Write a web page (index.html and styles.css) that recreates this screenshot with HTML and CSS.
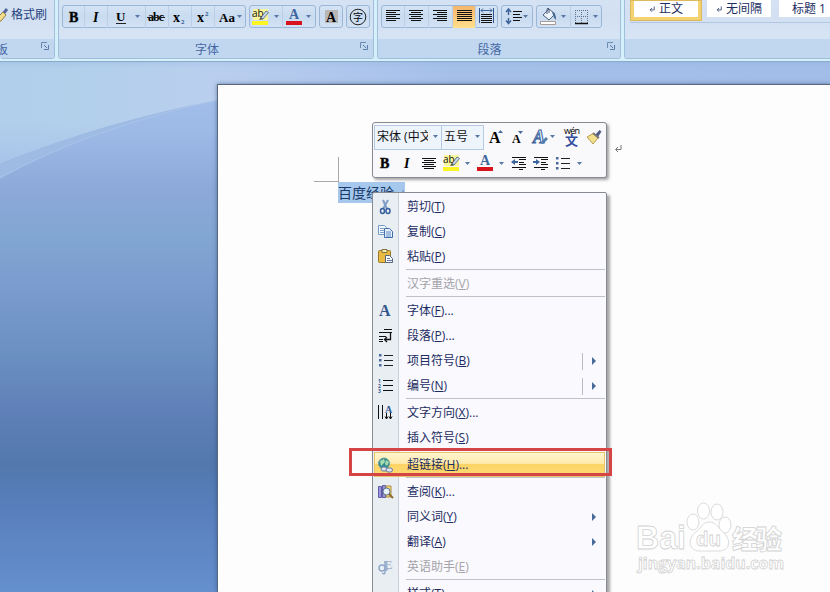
FILE: index.html
```html
<!DOCTYPE html>
<html lang="zh-CN">
<head>
    <meta charset="UTF-8">
    <meta name="viewport" content="width=device-width, initial-scale=1.0">
    <title>Word</title>
    <link rel="stylesheet" href="styles.css">
</head>
<body>
    <!-- shared icons -->
    <svg class="defs" width="0" height="0">
        <symbol id="drop" viewBox="0 0 5 3"><path d="M0 0h5L2.500 3z" fill="#5878a8"/></symbol>
        <symbol id="launcher" viewBox="0 0 8 8">
            <path d="M.5 6V.5H6" fill="none" stroke="#6b8bb3"/>
            <path d="M3 3l3 3M7.500 3v4.500H3" fill="none" stroke="#5d7ea8"/>
        </symbol>
        <symbol id="marker" viewBox="0 0 18 18">
            <path d="M1 1h15v11H1z" fill="#f8f59a"/>
            <text x="0" y="9" class="ui" font-size="10" fill="#111">ab</text>
            <path d="M8 11l6-8 2.500 1.500L11 11z" fill="#c9d8ea" stroke="#46617f" stroke-width=".8"/>
            <path d="M7 12l2-3 2 2z" fill="#555"/>
            <path d="M0 13h16v4H0z" fill="#fdf423"/>
        </symbol>
        <symbol id="fontcolor" viewBox="0 0 18 18">
            <text x="3" y="11" class="serif" font-size="14" fill="#3e659c">A</text>
            <path d="M0 13h16v4H0z" fill="#d9131d"/>
        </symbol>
        <symbol id="brush" viewBox="0 0 16 16">
            <path d="M9 6l4.500-5 2 1.500L12 8z" fill="#4f5d86"/>
            <path d="M1 8l6-3.500 5 4.500-5 6z" fill="#f3e08c" stroke="#a58a3a" stroke-width=".8"/>
            <path d="M7 4l6 5" stroke="#777" stroke-width="2"/>
        </symbol>
        <symbol id="bullets" viewBox="0 0 14 14">
            <path d="M0 1h2.500v2.500H0zM0 6h2.500v2.500H0zM0 11h2.500v2.500H0z" fill="#47699d"/>
            <path d="M5 2.500h9M5 7.500h9M5 12.500h9" stroke="#222"/>
        </symbol>
        <symbol id="return" viewBox="0 0 8 8">
            <path d="M7 0v4.500H2M4 2L1.500 4.500 4 7" fill="none" stroke="currentColor"/>
        </symbol>
    </svg>

    <div class="ribbon">
        <div class="group clipboard">
            <div class="tools">
                <svg width="9" height="18"><path d="M3 8l4-5" stroke="#5568a0" stroke-width="3"/><path d="M-3 12l6-6 3 3-5 6-4 1z" fill="#f2dc8a" stroke="#94803e"/></svg>
                <span>格式刷</span>
            </div>
            <div class="caption"><span class="cut">剪贴板</span><svg class="launcher"><use href="#launcher"/></svg></div>
        </div>

        <div class="group font">
            <div class="tools">
                <div class="buttons">
                    <svg width="22" height="22"><text x="6" y="16" class="serif bold" font-size="14" stroke="#111" stroke-width=".5">B</text></svg>
                    <svg width="23" height="22"><text x="8" y="16" class="serif italic" font-size="14">I</text></svg>
                    <svg width="38" height="22"><text x="8" y="15" class="serif" font-size="13">U</text><path d="M8 17.500h10" stroke="#222"/><use href="#drop" x="27" y="9" width="5" height="3"/></svg>
                    <svg width="23" height="22"><text x="2" y="15" class="serif" font-size="12" textLength="16">abc</text><path d="M1 11.500h18" stroke="#222"/></svg>
                    <svg width="23" height="22"><text x="4" y="16" class="serif" font-size="14">x</text><text x="12" y="18" class="ui bold" font-size="6" fill="#47699d">2</text></svg>
                    <svg width="23" height="22"><text x="5" y="16" class="serif" font-size="14">x</text><text x="13" y="10" class="ui bold" font-size="6" fill="#47699d">2</text></svg>
                    <svg width="30" height="22"><text x="4" y="16" class="serif" font-size="13" textLength="16">Aa</text><use href="#drop" x="22" y="9" width="5" height="3"/></svg>
                </div>
                <div class="buttons">
                    <svg width="33" height="22"><use href="#marker" x="2" y="2" width="18" height="18"/><use href="#drop" x="24" y="9" width="5" height="3"/></svg>
                    <svg width="32" height="22"><use href="#fontcolor" x="3" y="2" width="18" height="18"/><use href="#drop" x="23" y="9" width="5" height="3"/></svg>
                </div>
                <div class="buttons">
                    <svg width="22" height="22"><path d="M5 4h13v13H5z" fill="#b9b7b5"/><text x="6" y="16" class="serif" font-size="14">A</text></svg>
                </div>
                <div class="buttons">
                    <svg width="22" height="22"><circle cx="11" cy="11" r="7.800" fill="none" stroke="#222"/><text x="6" y="15" class="ui" font-size="10">字</text></svg>
                </div>
            </div>
            <div class="caption"><span>字体</span><svg class="launcher"><use href="#launcher"/></svg></div>
        </div>

        <div class="group paragraph">
            <div class="tools">
                <div class="buttons">
                    <svg width="23" height="22"><path d="M4 4.500h14M4 6.500h10M4 8.500h14M4 10.500h10M4 12.500h14M4 14.500h10" stroke="#111"/></svg>
                    <svg width="24" height="22"><path d="M4 4.500h14M6 6.500h10M4 8.500h14M6 10.500h10M4 12.500h14M6 14.500h10" stroke="#111"/></svg>
                    <svg width="24" height="22"><path d="M4 4.500h14M8 6.500h10M4 8.500h14M8 10.500h10M4 12.500h14M8 14.500h10" stroke="#111"/></svg>
                    <svg class="active" width="23" height="22"><path d="M4 4.500h15M4 6.500h15M4 8.500h15M4 10.500h15M4 12.500h15M4 14.500h15" stroke="#111"/></svg>
                    <svg width="21" height="22"><path d="M3.500 2v15M17.500 2v15" stroke="#31548c"/><path d="M5 4.500h11M7 2.500l-2 2 2 2M14 2.500l2 2-2 2" fill="none" stroke="#3e659c"/><path d="M5 8.500h11M5 10.500h11M5 12.500h11M5 14.500h11M5 16.500h11" stroke="#111"/></svg>
                </div>
                <div class="buttons">
                    <svg width="30" height="22"><path d="M6.500 4v5M4 6l2.500-3L9 6M6.500 12v5M4 14.500l2.500 3 2.500-3" fill="none" stroke="#3e659c" stroke-width="1.500"/><path d="M11 5.500h9M11 8.500h7M11 11.500h9M11 14.500h7" stroke="#111"/><use href="#drop" x="21" y="9" width="5" height="3"/></svg>
                </div>
                <div class="buttons">
                    <svg width="34" height="22"><path d="M6 9l6-6 6 5-6 6z" fill="#edf3fa" stroke="#4c5f7d"/><path d="M10 8V3q1-2 2 0v4" fill="none" stroke="#4c5f7d"/><path d="M15 6q4 0 4 8-2-1-3-5z" fill="#46699a"/><path d="M3.500 15.500h15v3h-15z" fill="#fff" stroke="#a89c94"/><use href="#drop" x="24" y="9" width="5" height="3"/></svg>
                    <svg width="30" height="22"><path d="M4.500 4v13M10.500 4v13M16.500 4v13M4 4.500h13M4 10.500h13" stroke="#60718f" stroke-dasharray="1 1"/><path d="M4 17.500h13" stroke="#111" stroke-width="1.500"/><use href="#drop" x="22" y="9" width="5" height="3"/></svg>
                </div>
            </div>
            <div class="caption"><span>段落</span><svg class="launcher"><use href="#launcher"/></svg></div>
        </div>

        <div class="group styles">
            <div class="gallery">
                <div class="style selected"><svg class="return"><use href="#return"/></svg>正文</div>
                <div class="style"><svg class="return"><use href="#return"/></svg>无间隔</div>
                <div class="style heading">标题 1</div>
            </div>
            <div class="caption"></div>
        </div>
    </div>

    <div class="workspace">
        <svg class="swoosh" width="830" height="130">
            <defs>
                <linearGradient id="sky" x1="0" y1="0" x2="1" y2="0">
                    <stop offset="0" stop-color="#b0cfea"/>
                    <stop offset=".12" stop-color="#b3cfeb"/>
                    <stop offset=".26" stop-color="#bacfef"/>
                    <stop offset=".55" stop-color="#a5bfe9"/>
                    <stop offset="1" stop-color="#a2bde8"/>
                </linearGradient>
                <linearGradient id="fade" x1="0" y1="0" x2="0" y2="1">
                    <stop offset="0" stop-color="#7ea4d6" stop-opacity=".2"/>
                    <stop offset=".08" stop-color="#a9c7ec" stop-opacity="0"/>
                    <stop offset=".6" stop-color="#a8c4ea" stop-opacity="0"/>
                    <stop offset="1" stop-color="#a8c4ea" stop-opacity=".9"/>
                </linearGradient>
            </defs>
            <path d="M0 116Q90 66 218 38L830 0H0z" fill="#9dbbe3"/>
            <path d="M0 116Q90 66 218 38" fill="none" stroke="#a9c5eb"/>
            <path d="M0 101Q110 58 218 38L300 24H830V0H0z" fill="url(#sky)"/>
            <path d="M0 101Q110 58 218 38L300 24H830V0H0z" fill="url(#fade)"/>
        </svg>
        <div class="page">
            <svg class="corner" width="25" height="25"><path d="M24.500 0v24.500M0 24.500h25" stroke="#a9a9a9" fill="none"/></svg>
            <span class="selection">百度经验<svg class="return"><use href="#return"/></svg></span>
            <svg class="return line-end"><use href="#return"/></svg>
            <svg class="watermark" width="160" height="80">
                <text x="1" y="49" class="logo" font-size="34" textLength="50" lengthAdjust="spacingAndGlyphs">Bai</text>
                <ellipse cx="58" cy="22" rx="6" ry="8"/>
                <ellipse cx="68.500" cy="11" rx="6" ry="8"/>
                <ellipse cx="82" cy="12" rx="6" ry="8"/>
                <ellipse cx="90" cy="25" rx="6" ry="8"/>
                <path d="M74 22c-6 0-8 6-13 10-10 8-6 19 3 19 5 0 16 0 20 0 10 0 13-10 5-18-5-4-8-11-15-11z"/>
                <text x="61" y="46" class="logo" font-size="21" textLength="25" lengthAdjust="spacingAndGlyphs">du</text>
                <text x="97" y="49" class="ui heavy" font-size="26" textLength="50">经验</text>
                <text x="3" y="69" class="ui bold" font-size="16" textLength="146" lengthAdjust="spacingAndGlyphs">jingyan.baidu.com</text>
            </svg>
        </div>
    </div>

    <div class="mini-toolbar">
        <div class="row">
            <div class="combo family"><span>宋体 (中文)</span><svg><use href="#drop"/></svg></div>
            <div class="combo size"><span>五号</span><svg><use href="#drop"/></svg></div>
            <svg width="24" height="24"><text x="5" y="18" class="serif" font-size="16">A</text><path d="M14 8l2.500-3L19 8z" fill="#47699d"/></svg>
            <svg width="22" height="24"><text x="4" y="18" class="serif" font-size="12">A</text><path d="M10 6h5l-2.500 3z" fill="#47699d"/></svg>
            <svg width="32" height="24"><text x="3" y="18" class="serif italic" font-size="18" fill="#dcebf8" stroke="#3e659c">A</text><path d="M10 18l6-6 2 2-5 5z" fill="#527eac"/><use href="#drop" x="20" y="10" width="5" height="3"/></svg>
            <svg width="24" height="24"><text x="2" y="9" class="ui" font-size="9" textLength="16">wén</text><text x="3" y="20" class="ui bold" font-size="13" fill="#334f9f">文</text></svg>
            <svg width="19" height="24"><use href="#brush" x="0" y="4" width="16" height="16"/></svg>
        </div>
        <div class="row">
            <svg width="23" height="26"><text x="6" y="18" class="serif bold" font-size="14" stroke="#111" stroke-width=".5">B</text></svg>
            <svg width="24" height="26"><text x="7" y="18" class="serif italic" font-size="14">I</text></svg>
            <svg width="21" height="26"><path d="M1 8.500h14M3 10.500h10M1 12.500h14M3 14.500h10M1 16.500h14M3 18.500h10" stroke="#111"/></svg>
            <svg width="34" height="26"><use href="#marker" x="1" y="4" width="18" height="18"/><use href="#drop" x="23" y="12" width="5" height="3"/></svg>
            <svg width="34" height="26"><use href="#fontcolor" x="1" y="4" width="18" height="18"/><use href="#drop" x="23" y="12" width="5" height="3"/></svg>
            <svg width="22" height="26"><path d="M2 7.500h14M9 9.500h7M9 12.500h5M9 14.500h7M2 17.500h14M9 19.500h4" stroke="#111"/><path d="M1 12l4-3v2h3v2H5v2z" fill="#3e659c"/></svg>
            <svg width="22" height="26"><path d="M2 7.500h14M9 9.500h7M9 12.500h5M9 14.500h7M2 17.500h14M9 19.500h4" stroke="#111"/><path d="M8 12L4 9v2H1v2h3v2z" fill="#3e659c"/></svg>
            <svg width="30" height="26"><use href="#bullets" x="2" y="6" width="14" height="14"/><use href="#drop" x="23" y="12" width="5" height="3"/></svg>
        </div>
    </div>

    <ul class="menu">
        <li><svg><path d="M6 1l4 9M11 1L6 10" stroke="#7f9cc4" stroke-width="2"/><ellipse cx="5.500" cy="12" rx="2" ry="2.500" fill="none" stroke="#365f9e" stroke-width="1.500"/><ellipse cx="11" cy="12" rx="2" ry="2.500" fill="none" stroke="#365f9e" stroke-width="1.500"/></svg><span>剪切(<u>T</u>)</span></li>
        <li><svg><path d="M1.500 1.500h6l2 2v7h-8z" fill="#f3f8fe" stroke="#7399c8"/><path d="M3 4.500h4M3 6.500h4M3 8.500h4" stroke="#7ba2d0"/><path d="M7.500 4.500h5l3 3v6h-8z" fill="#e4f0fd" stroke="#426da9"/><path d="M9 8h5M9 10h5M9 12h5" stroke="#5f8bc4"/></svg><span>复制(<u>C</u>)</span></li>
        <li><svg><rect x="1.500" y="1.500" width="12" height="12" rx="1" fill="#e9bb45" stroke="#9b762a"/><path d="M5 .5h5v3H5z" fill="#f7efb2" stroke="#85733f"/><path d="M8.500 6.500h4l3 3v4h-7z" fill="#f6f9fd" stroke="#59657a"/><path d="M10 9.500h3M10 11.500h5" stroke="#697b98"/></svg><span>粘贴(<u>P</u>)</span></li>
        <li class="sep"></li>
        <li class="disabled"><svg></svg><span>汉字重选(<u>V</u>)</span></li>
        <li class="sep"></li>
        <li><svg><text x="2" y="13" class="serif" font-size="16" fill="#31558c">A</text></svg><span>字体(<u>F</u>)...</span></li>
        <li><svg><path d="M7 1.500h8M2 4.500h13M2 8.500h7M2 11.500h4M2 13.500h4" stroke="#111"/><path d="M13.500 5v6.500H8M10 9l-2.500 2.500L10 14" fill="none" stroke="#111" stroke-width="1.300"/></svg><span>段落(<u>P</u>)...</span></li>
        <li class="split"><svg><use href="#bullets" x="2" y="0" width="14" height="14"/></svg><span>项目符号(<u>B</u>)</span><b class="arrow"></b></li>
        <li class="split"><svg><text x="1" y="5" class="ui bold" font-size="5" fill="#31558c">1</text><text x="1" y="10" class="ui bold" font-size="5" fill="#31558c">2</text><text x="1" y="15" class="ui bold" font-size="5" fill="#31558c">3</text><path d="M6 2.500h10M6 7.500h10M6 12.500h10" stroke="#111"/></svg><span>编号(<u>N</u>)</span><b class="arrow"></b></li>
        <li class="sep"></li>
        <li><svg><path d="M1.500 0v14M5.500 0v14M9.500 8v6M13.500 8v6M8 11.500l1.500 2.500 1.500-2.500M12 11.500l1.500 2.500 1.500-2.500" fill="none" stroke="#111"/><text x="8" y="8" class="serif" font-size="10" fill="#31558c">A</text></svg><span>文字方向(<u>X</u>)...</span></li>
        <li><svg></svg><span>插入符号(<u>S</u>)</span></li>
        <li class="sep"></li>
        <li class="hover"><svg><circle cx="7" cy="6.500" r="5.500" fill="#348c91" stroke="#6d9c9a"/><path d="M3 4l4-2 1 3-4 4zM9 3l3 2-2 4-2-2z" fill="#a6dcae"/><rect x="4" y="10" width="6" height="4" rx="2" fill="#dbe3ee" stroke="#647a9b"/><rect x="9" y="11" width="6.500" height="4" rx="2" fill="#dbe3ee" stroke="#647a9b"/></svg><span>超链接(<u>H</u>)...</span></li>
        <li class="sep"></li>
        <li><svg><path d="M1.500 2.500h3v11h-3zM5.500 1.500h3v12h-3z" fill="#9d95db" stroke="#5d5ca5"/><path d="M9 2h5v11H9z" fill="#f2d878" stroke="#ae8b3e"/><circle cx="9.500" cy="7.500" r="3.500" fill="#e6f3fb" stroke="#58718e"/><path d="M12 10l4 4" stroke="#8b6d32" stroke-width="2"/></svg><span>查阅(<u>K</u>)...</span></li>
        <li><svg></svg><span>同义词(<u>Y</u>)</span><b class="arrow"></b></li>
        <li><svg></svg><span>翻译(<u>A</u>)</span><b class="arrow"></b></li>
        <li class="disabled"><svg><text x="7" y="10" class="serif" font-size="13" fill="#a1b2cc">E</text><circle cx="5" cy="9" r="3" fill="none" stroke="#92a9cb" stroke-width="1.500"/><path d="M8 2v11q0 3-3 1M8 12l3-2" fill="none" stroke="#92a9cb" stroke-width="1.500"/></svg><span>英语助手(<u>E</u>)</span></li>
        <li class="sep"></li>
        <li><svg></svg><span>样式(<u>T</u>)</span><b class="arrow"></b></li>
    </ul>

    <div class="callout"></div>
</body>
</html>
```
FILE: styles.css
```css
* {
    box-sizing: border-box;
}
body {
    margin: 0;
    height: 592px;
    overflow: hidden;
    position: relative;
    display: flex;
    flex-direction: column;
    font-family: "Open Sans", "Noto Sans CJK SC", sans-serif;
    font-size: 12px;
    color: #1c2c62;
}
svg {
    display: block;
    flex: none;
}
.defs {
    position: absolute;
}
.ui {
    font-family: "Open Sans", "Noto Sans CJK SC", sans-serif;
}
.serif {
    font-family: "Liberation Serif", serif;
    font-weight: bold;
}
.logo {
    font-family: "Liberation Sans", sans-serif;
    font-weight: bold;
}
.bold {
    font-weight: bold;
}
.heavy {
    font-weight: 900;
}
.italic {
    font-style: italic;
}
.return {
    display: inline-block;
    width: 8px;
    height: 8px;
}

/* ribbon */
.ribbon {
    display: flex;
    gap: 3px;
    height: 62px;
    flex: none;
    padding-bottom: 2px;
    background: #d5f0fa;
    border-bottom: 1px solid #8aabcb;
    overflow: hidden;
}
.group {
    flex: none;
    display: flex;
    flex-direction: column;
    border: 1px solid #9fbfdb;
    border-top: 0;
    border-radius: 0 0 3px 3px;
    background: linear-gradient(#d4e2f3, #d2e0f2 30%, #dbe7f6);
}
.clipboard {
    width: 55px;
    border-left: 0;
}
.font {
    width: 316px;
}
.paragraph {
    width: 244px;
}
.styles {
    width: 220px;
}
.tools {
    height: 39px;
    display: flex;
    gap: 3px;
    padding: 5px 0 0 3px;
}
.clipboard .tools {
    padding: 6px 0 0;
    gap: 2px;
    color: #26427e;
    line-height: 18px;
}
.buttons {
    display: flex;
    height: 23px;
    border: 1px solid #9ab7d8;
    border-radius: 3px;
    background: linear-gradient(#d5e3f4, #c9dbf0 50%, #d3e2f4);
}
.buttons svg + svg {
    box-shadow: -1px 0 #b9cee7;
}
.font .buttons:first-child {
    width: 184px;
}
.buttons .active {
    background: linear-gradient(#f4b86c, #fbc274 40%, #ffe28e);
}
.caption {
    height: 19px;
    display: flex;
    align-items: center;
    justify-content: center;
    position: relative;
    padding-right: 18px;
    background: #c1d7f0;
    color: #4468a3;
}
.paragraph .caption {
    padding-right: 19px;
}
.clipboard .caption {
    justify-content: flex-start;
}
.cut {
    margin-left: -28px;
}
.launcher {
    position: absolute;
    right: 5px;
    top: 3px;
    width: 8px;
    height: 8px;
}
.gallery {
    height: 23px;
    margin: 0 0 16px 5px;
    display: flex;
    border-bottom: 1px solid #b1c7e2;
}
.style {
    height: 17px;
    margin-right: 8px;
    width: 64px;
    flex: none;
    background: #fff;
    text-align: center;
    line-height: 17px;
}
.style .return {
    width: 6px;
    height: 7px;
    margin-right: 4px;
}
.style.selected {
    width: 72px;
    height: 21px;
    margin-right: 5px;
    border: 4px solid #f3d271;
    border-top: 0;
    outline: 1px solid #dcb95d;
    outline-offset: -1px;
}
.style.heading {
    padding-left: 13px;
    text-align: left;
}

/* document area */
.workspace {
    flex: 1;
    display: flex;
    position: relative;
    padding: 22px 0 0 217px;
    background: linear-gradient(#a6c0ec, #9dbae7 13%, #8ca9d9 24%, #82a6d2 33%, #7c9dcf 41%, #6c91c2 54%, #6081b9 65%, #5278ae 76%, #587fbb 84%, #6490cd);
}
.swoosh {
    position: absolute;
    left: 0;
    top: 0;
}
.page {
    flex: 1;
    position: relative;
    background: #fdfdfd;
    border: solid #59687d;
    border-width: 1px 0 0 1px;
    box-shadow: 0 0 4px rgba(40, 70, 110, 0.6);
    padding: 72px 0 0 96px;
}
.selection {
    display: block;
    margin: 0 0 0 24px;
    width: 67px;
    height: 21px;
    white-space: nowrap;
    font-size: 14px;
    line-height: 21px;
    background: #a6c8ed;
    color: #173a6a;
}
.selection .return {
    margin-left: 2px;
    color: #6688b5;
}
.line-end {
    position: absolute;
    left: 396px;
    top: 60px;
    color: #777;
}
.watermark {
    position: absolute;
    left: 417px;
    top: 415px;
    fill: #fff;
    stroke: #d2d2d2;
    stroke-width: 0.8;
}

/* floating toolbar */
.mini-toolbar {
    position: absolute;
    left: 372px;
    top: 122px;
    width: 235px;
    height: 56px;
    padding: 2px 1px;
    border: 1px solid #868a92;
    border-radius: 3px;
    background: #f9f8fb;
    box-shadow: 2px 2px 3px rgba(0, 0, 0, 0.35);
}
.row {
    display: flex;
}
.combo {
    height: 25px;
    display: flex;
    align-items: center;
    justify-content: space-between;
    border: 1px solid #b5cae5;
    background: #edf4fc;
    padding: 0 3px 2px 2px;
    color: #111;
    line-height: 20px;
}
.combo span {
    overflow: hidden;
    white-space: nowrap;
}
.combo svg {
    width: 5px;
    height: 3px;
}
.family {
    width: 68px;
}
.family span {
    width: 51px;
}
.size {
    width: 43px;
    margin-left: -1px;
}

/* context menu */
.menu {
    position: absolute;
    left: 372px;
    top: 192px;
    width: 235px;
    height: 420px;
    margin: 0;
    padding: 1px 1px 0 0;
    list-style: none;
    border: 1px solid #868a92;
    border-radius: 2px;
    background: linear-gradient(90deg, #e9eef2 25px, #c9cfd8 25px, #c9cfd8 26px, #faf9fd 26px);
    box-shadow: 3px 3px 3px rgba(0, 0, 0, 0.35);
}
.menu li {
    height: 25px;
    display: flex;
    align-items: center;
    padding: 0 9px 0 4px;
}
.menu svg {
    width: 17px;
    height: 16px;
    margin-right: 13px;
}
.menu span {
    flex: 1;
    line-height: 18px;
}
.menu u {
    text-underline-offset: 1px;
}
.menu .sep {
    height: 2px;
    margin-left: 33px;
    padding: 0;
    border-top: 1px solid #bfc2c8;
}
.menu .disabled {
    color: #a4a4aa;
}
.menu .hover {
    margin-left: 1px;
    padding-left: 2px;
    background: linear-gradient(#fff5ce, #ffebad 45%, #fdd466 50%, #ffdb73);
    border: 1px solid #e8c46b;
}
.arrow {
    border: solid transparent;
    border-width: 4px 0 4px 4px;
    border-left-color: #4a6a9a;
}
.split .arrow {
    position: relative;
}
.split .arrow::before {
    content: "";
    position: absolute;
    left: -14px;
    top: -8px;
    height: 17px;
    border-left: 1px solid #b8bcc4;
}

/* red frame round the hyperlink entry */
.callout {
    position: absolute;
    left: 349px;
    top: 448px;
    width: 263px;
    height: 28px;
    border: 3px solid #d64545;
}
```
